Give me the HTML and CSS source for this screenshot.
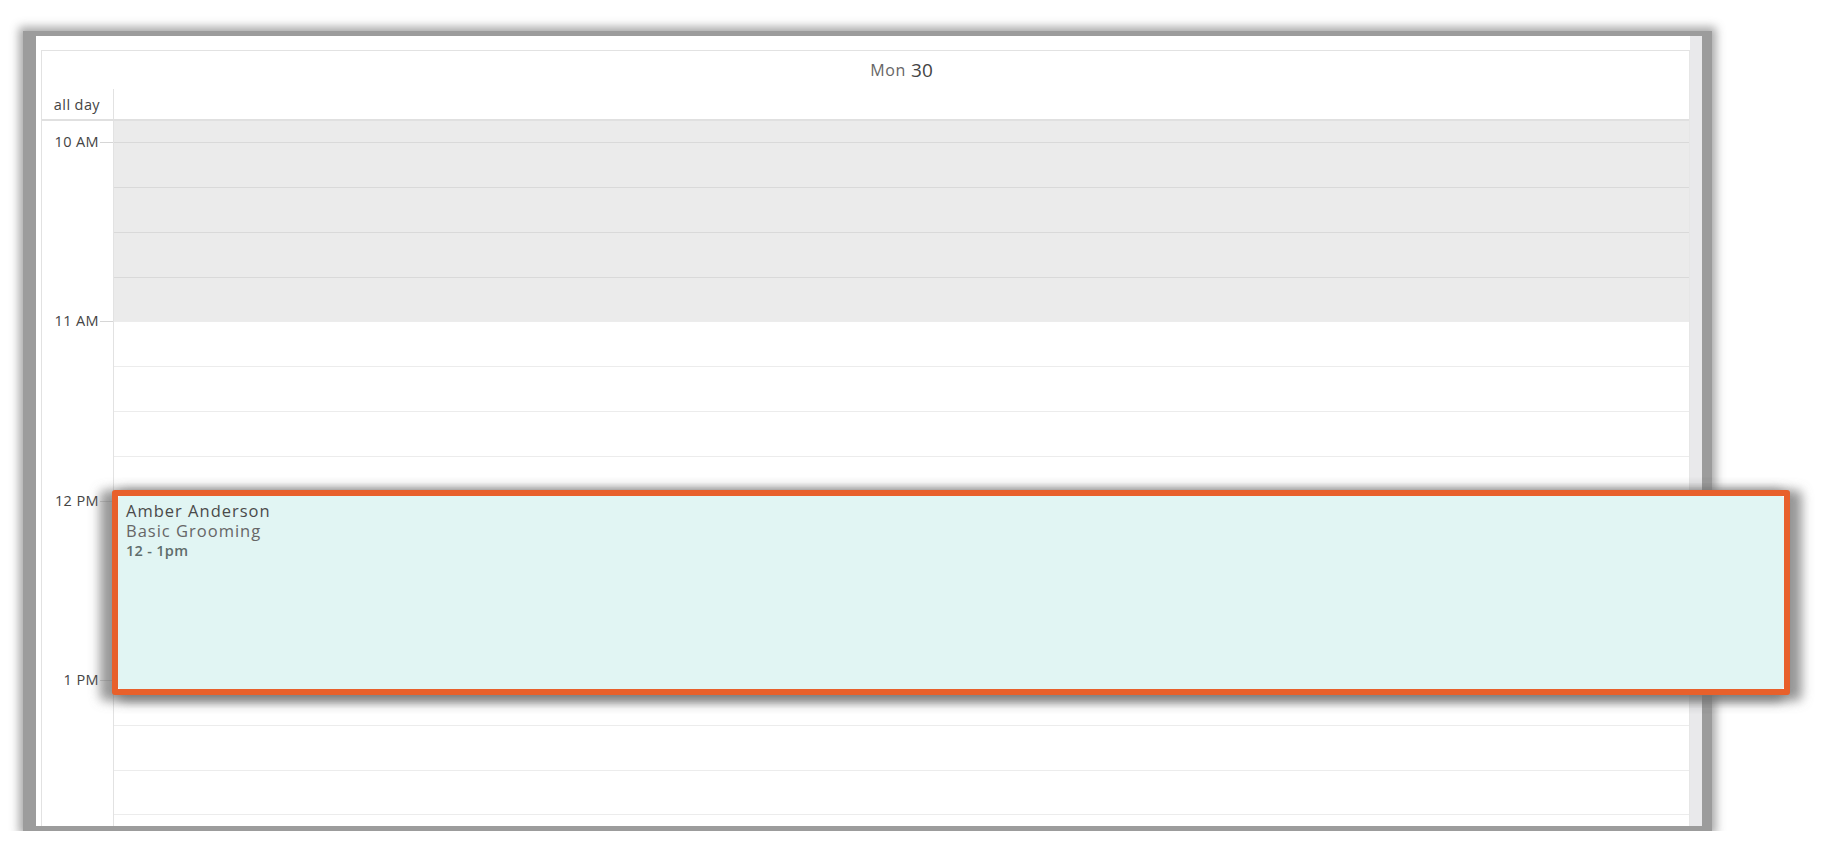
FILE: index.html
```html
<!DOCTYPE html>
<html>
<head>
    <meta charset="UTF-8">
    <title>Day View</title>
    <link rel="stylesheet" href="styles.css">
</head>
<body>
    <div class="shot">
        <div class="panel">
            <div class="cal-wrap">
                <div class="cal">
                    <div class="cal-head">
                        <div class="head-axis"></div>
                        <div class="head-day"><span class="dow">Mon</span> <span class="dom">30</span></div>
                    </div>
                    <div class="allday">
                        <div class="axis">all day</div>
                        <div class="day"></div>
                    </div>
                    <div class="divider"></div>
                    <div class="grid">
                        <div class="grid-inner">
                            <div class="slot off"><div class="axis"></div><div class="day"></div></div>
                            <div class="slot off"><div class="axis"><span class="label">10 AM</span><span class="tick"></span></div><div class="day"></div></div>
                            <div class="slot off"><div class="axis"></div><div class="day"></div></div>
                            <div class="slot off"><div class="axis"></div><div class="day"></div></div>
                            <div class="slot off"><div class="axis"></div><div class="day"></div></div>
                            <div class="slot"><div class="axis"><span class="label">11 AM</span><span class="tick"></span></div><div class="day"></div></div>
                            <div class="slot"><div class="axis"></div><div class="day"></div></div>
                            <div class="slot"><div class="axis"></div><div class="day"></div></div>
                            <div class="slot"><div class="axis"></div><div class="day"></div></div>
                            <div class="slot"><div class="axis"><span class="label">12 PM</span><span class="tick"></span></div><div class="day"></div></div>
                            <div class="slot"><div class="axis"></div><div class="day"></div></div>
                            <div class="slot"><div class="axis"></div><div class="day"></div></div>
                            <div class="slot"><div class="axis"></div><div class="day"></div></div>
                            <div class="slot"><div class="axis"><span class="label">1 PM</span><span class="tick"></span></div><div class="day"></div></div>
                            <div class="slot"><div class="axis"></div><div class="day"></div></div>
                            <div class="slot"><div class="axis"></div><div class="day"></div></div>
                            <div class="slot"><div class="axis"></div><div class="day"></div></div>
                        </div>
                    </div>
                </div>
            </div>
            <div class="scrollbar"></div>
        </div>
    </div>

    <!-- highlighted appointment -->
    <div class="event-hl">
        <div class="event">
            <div class="event-name">Amber Anderson</div>
            <div class="event-service">Basic Grooming</div>
            <div class="event-time">12 - 1pm</div>
        </div>
    </div>
</body>
</html>
```

FILE: styles.css
```css
body {
    margin: 0;
    background-color: #fff;
    font-family: "Open Sans", Arial, sans-serif;
    color: #444;
    overflow: hidden;
}

.shot {
    margin: 31px 0 0 23px;
    width: 1666px;
    padding: 5px 10px 5px 13px;
    background-color: #9c9c9c;
    box-shadow: 0 0 9px 4px rgba(150, 150, 150, 0.85);
}

.panel {
    display: flex;
    height: 790px;
    background: #fff;
}

.cal-wrap {
    flex: 1;
    padding: 14px 0 0 5px;
}

.cal {
    border-top: 1px solid #e2e2e2;
    border-left: 1px solid #e2e2e2;
    border-right: 1px solid #e6e6e6;
    height: 775px;
    overflow: hidden;
}

.scrollbar {
    width: 12px;
    background-color: #e9e9eb;
}

.cal-head {
    display: flex;
    height: 38px;
}

.head-axis {
    width: 72px;
}

.head-day {
    flex: 1;
    display: flex;
    justify-content: center;
    align-items: center;
    gap: 5px;
}

.dow {
    font-size: 16px;
    color: #666;
    letter-spacing: 0.7px;
}

.dom {
    font-size: 19px;
    color: #444;
}

.allday {
    display: flex;
    height: 30px;
}

.axis {
    width: 71px;
    border-right: 1px solid #e2e2e2;
    font-size: 14.5px;
    color: #444;
    letter-spacing: 0.4px;
}

.allday .axis {
    display: flex;
    align-items: center;
    justify-content: flex-end;
    padding-right: 13px;
    box-sizing: border-box;
    width: 72px;
}

.allday .day {
    flex: 1;
}

.divider {
    height: 2px;
    background-color: #e0e0e0;
}

.grid {
    height: 705px;
    overflow: hidden;
}

.grid-inner {
    margin-top: -23.8px;
}

.slot {
    display: flex;
    height: 44.83px;
    box-sizing: border-box;
}

.slot .axis {
    display: flex;
    justify-content: flex-end;
    align-items: flex-start;
}

.slot .day {
    flex: 1;
    border-top: 1px solid #ececec;
}

.slot.off .day {
    background-color: #ebebeb;
    border-top-color: #d9d9d9;
}

.label {
    line-height: 18px;
    margin-top: -9px;
    height: 18px;
}

.tick {
    width: 13px;
    margin-left: 1px;
    border-top: 1px solid #d6d6d6;
}

.event-hl {
    position: absolute;
    left: 112px;
    top: 490px;
    width: 1678px;
    height: 205px;
    box-sizing: border-box;
    border: 6px solid #e8602b;
    border-radius: 3px;
    background-color: #fff;
    box-shadow: -9px 3px 11px 3px rgba(110, 110, 110, 0.7), 9px 3px 11px 3px rgba(110, 110, 110, 0.7);
}

.event {
    height: 100%;
    background-color: #e1f5f3;
    border-radius: 3px;
    padding: 4px 8px;
    box-sizing: border-box;
}

.event-name {
    font-size: 16.5px;
    line-height: 21px;
    color: #4a4a4a;
    letter-spacing: 1px;
}

.event-service {
    font-size: 16.5px;
    line-height: 20px;
    color: #666;
    letter-spacing: 1px;
}

.event-time {
    font-size: 14.5px;
    line-height: 19px;
    font-weight: 600;
    color: #5f6d6b;
    letter-spacing: 0.3px;
}
```
